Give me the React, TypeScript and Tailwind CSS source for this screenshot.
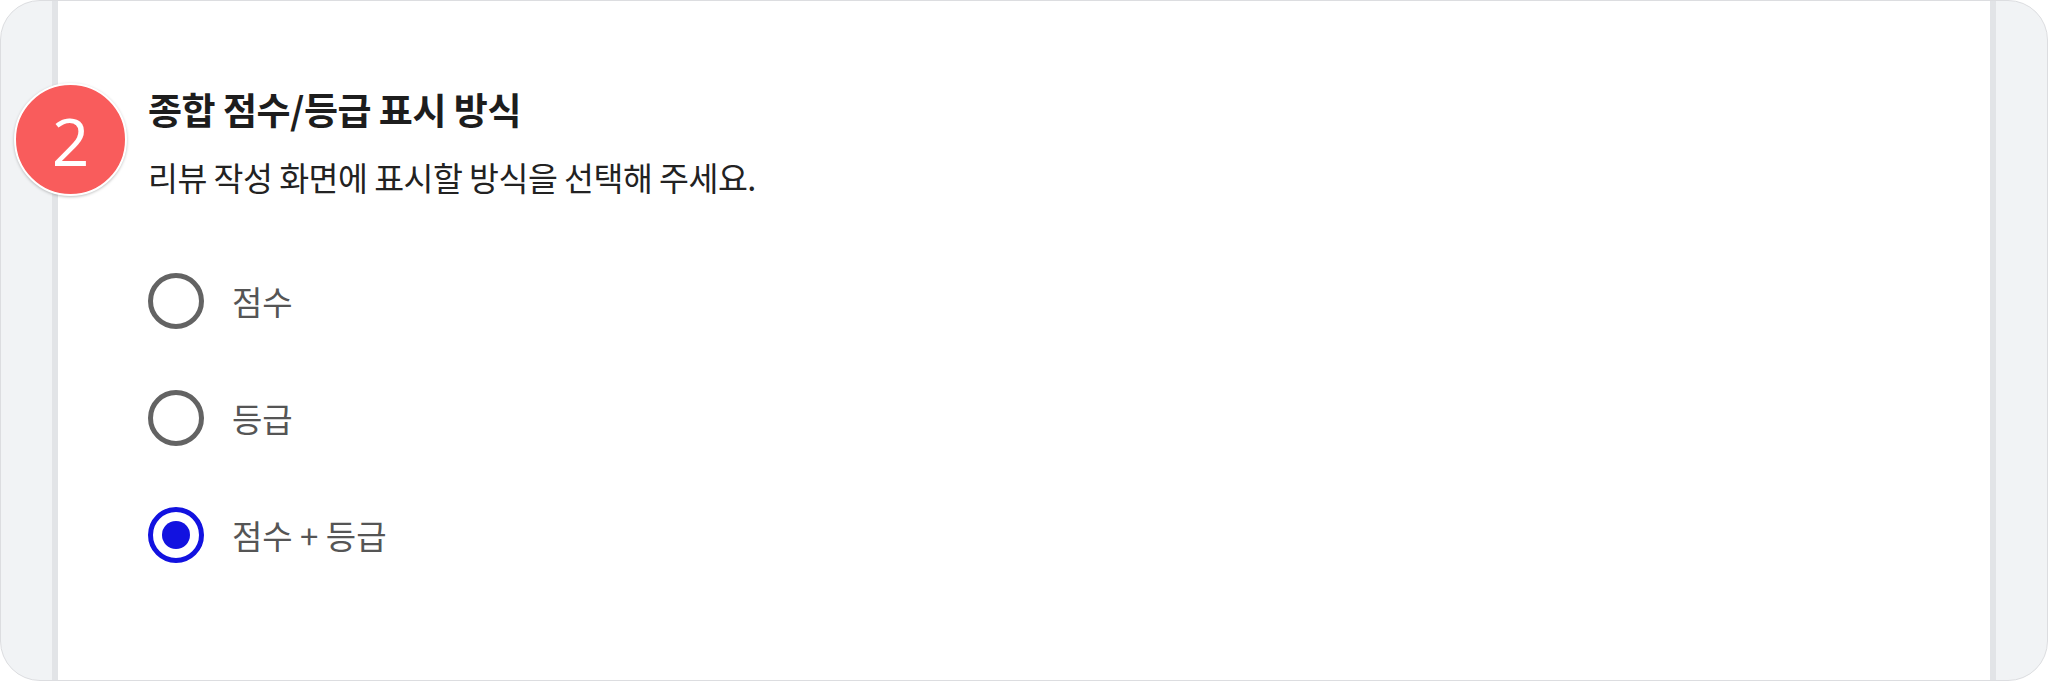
import React, { useState } from 'react';

const options = ['점수', '등급', '점수 + 등급'];

const Radio: React.FC<{ checked: boolean }> = ({ checked }) => (
  <span
    className={`flex items-center justify-center w-[56px] h-[56px] rounded-full border-[5px] ${
      checked ? 'border-[#1212e0]' : 'border-[#636363]'
    }`}
  >
    {checked && <span className="w-[28px] h-[28px] rounded-full bg-[#1212e0]" />}
  </span>
);

const App: React.FC = () => {
  const [selected, setSelected] = useState(2);

  return (
    <div
      className="w-[2048px] h-[681px] relative flex overflow-hidden rounded-[40px] border border-[#dcdde0] bg-[#f1f3f5]"
      style={{ fontFamily: '"Noto Sans CJK KR", "Noto Sans", sans-serif' }}
    >
      <div className="w-[51px]" />
      <div className="w-[6px] bg-[#e2e4e7]" />

      <div className="flex-1 bg-white pl-[90px] pt-[86px]">
        <h2 className="text-[37px] leading-[44px] font-bold text-[#1d1d1d] tracking-[-0.5px]">
          종합 점수/등급 표시 방식
        </h2>
        <p className="mt-[26px] text-[32.5px] leading-[40px] text-[#222] tracking-[-0.5px]">
          리뷰 작성 화면에 표시할 방식을 선택해 주세요.
        </p>

        <div className="mt-[76px] flex flex-col gap-[61px]">
          {options.map((label, i) => (
            <label
              key={label}
              className="flex items-center gap-[28px] cursor-pointer"
              onClick={() => setSelected(i)}
            >
              <Radio checked={selected === i} />
              <span className="text-[33px] leading-[56px] text-[#555]">{label}</span>
            </label>
          ))}
        </div>
      </div>

      <div className="w-[6px] bg-[#e2e4e7]" />
      <div className="w-[51px]" />

      {/* step badge */}
      <div className="absolute left-[13px] top-[82px] w-[113px] h-[113px] rounded-full bg-[#f95c5c] border-2 border-white shadow-[0_1px_3px_rgba(0,0,0,0.25)] flex items-center justify-center">
        <span
          className="text-[66px] leading-none text-white"
          style={{ fontFamily: '"Open Sans", "Noto Sans", sans-serif' }}
        >
          2
        </span>
      </div>
    </div>
  );
};

export default App;
